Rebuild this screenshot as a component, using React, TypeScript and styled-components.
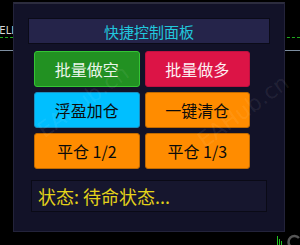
import React from "react";
import styled, { createGlobalStyle } from "styled-components";

const Global = createGlobalStyle`
  html, body { margin: 0; padding: 0; background: #000; }
  body { font-family: "Noto Sans CJK SC", "Noto Sans", sans-serif; }
`;

const Stage = styled.div`
  position: relative;
  width: 300px;
  height: 245px;
  background: #000;
  overflow: hidden;
`;

const ChartLayer = styled.div`
  position: absolute;
  inset: 0;
  pointer-events: none;
`;

const SellLabel = styled.div`
  position: absolute;
  left: -7px;
  top: 25px;
  font-family: "DejaVu Sans", sans-serif;
  font-size: 10px;
  color: #d8d8d8;
`;

const DashLine = styled.div<{ $top: number }>`
  position: absolute;
  left: 0;
  right: 0;
  top: ${(p) => p.$top}px;
  border-top: 1px dashed #1fa81f;
`;

const SolidLine = styled.div<{ $top: number }>`
  position: absolute;
  left: 0;
  right: 0;
  top: ${(p) => p.$top}px;
  height: 1px;
  background: #7d8ea0;
`;

const Panel = styled.div`
  position: relative;
  margin: 2px 0 0 13px;
  width: 272px;
  height: 230px;
  background: #121228;
  border: 1px solid #23233a;
  border-top: 2px solid #2c2c3e;
  padding: 14px 14px 19px 14px;
  box-sizing: border-box;
  display: flex;
  flex-direction: column;
`;

const TitleBar = styled.div`
  height: 28px;
  background: #25244a;
  border: 1px solid #0b0b18;
  box-sizing: border-box;
  display: flex;
  align-items: center;
  justify-content: center;
  color: #21c7dd;
  font-size: 15px;
`;

const ButtonGrid = styled.div`
  margin: 7px 20px 0 6px;
  display: grid;
  grid-template-columns: 1fr 1fr;
  grid-auto-rows: 36px;
  column-gap: 5px;
  row-gap: 5px;
`;

const ActionButton = styled.button<{ $bg: string; $border: string; $fg: string }>`
  background: ${(p) => p.$bg};
  border: 1px solid ${(p) => p.$border};
  border-radius: 3px;
  color: ${(p) => p.$fg};
  font-family: "Noto Sans CJK SC", "Noto Sans", sans-serif;
  font-size: 16px;
  padding: 0;
  display: flex;
  align-items: center;
  justify-content: center;
  cursor: pointer;
`;

const StatusBox = styled.div`
  margin: 11px 3px 0 3px;
  height: 34px;
  background: #16162e;
  border: 1px solid #0a0a16;
  box-sizing: border-box;
  display: flex;
  align-items: center;
  padding-left: 6px;
  color: #e3d21a;
  font-size: 18px;
`;

const Watermark = styled.div<{ $x: number; $y: number }>`
  position: absolute;
  left: ${(p) => p.$x}px;
  top: ${(p) => p.$y}px;
  transform: rotate(-36deg);
  transform-origin: left center;
  font-family: "DejaVu Sans", sans-serif;
  font-size: 22px;
  color: rgba(255, 255, 255, 0.08);
  white-space: nowrap;
  pointer-events: none;
`;

const buttons = [
  { label: "批量做空", bg: "#229122", border: "#34c534", fg: "#eaf5ea" },
  { label: "批量做多", bg: "#dc1446", border: "#c01040", fg: "#fdeef2" },
  { label: "浮盈加仓", bg: "#00bfff", border: "#1a8fc0", fg: "#0a0a0a" },
  { label: "一键清仓", bg: "#ff8c00", border: "#c06a00", fg: "#0a0a0a" },
  { label: "平仓 1/2", bg: "#ff8c00", border: "#c06a00", fg: "#0a0a0a" },
  { label: "平仓 1/3", bg: "#ff8c00", border: "#c06a00", fg: "#0a0a0a" },
];

export default function App() {
  return (
    <Stage>
      <Global />
      <ChartLayer>
        <SellLabel>SELL</SellLabel>
        <DashLine $top={37} />
        <SolidLine $top={50} />
        <svg
          width="300"
          height="245"
          style={{ position: "absolute", left: 0, top: 0 }}
        >
          <line x1="277.5" y1="236" x2="277.5" y2="245" stroke="#22c022" strokeWidth="1" />
          <line x1="279.5" y1="239" x2="279.5" y2="245" stroke="#22c022" strokeWidth="1" />
          <line x1="281.5" y1="241" x2="281.5" y2="245" stroke="#22c022" strokeWidth="1" />
          <path d="M299 238 A6 6 0 1 0 299 246" fill="none" stroke="#555" strokeWidth="2.5" />
        </svg>
      </ChartLayer>
      <Panel>
        <TitleBar>快捷控制面板</TitleBar>
        <ButtonGrid>
          {buttons.map((b) => (
            <ActionButton key={b.label} $bg={b.bg} $border={b.border} $fg={b.fg}>
              {b.label}
            </ActionButton>
          ))}
        </ButtonGrid>
        <StatusBox>状态: 待命状态...</StatusBox>
      </Panel>
      <Watermark $x={40} $y={120}>EAHub.cn</Watermark>
      <Watermark $x={200} $y={130}>EAHub.cn</Watermark>
    </Stage>
  );
}
